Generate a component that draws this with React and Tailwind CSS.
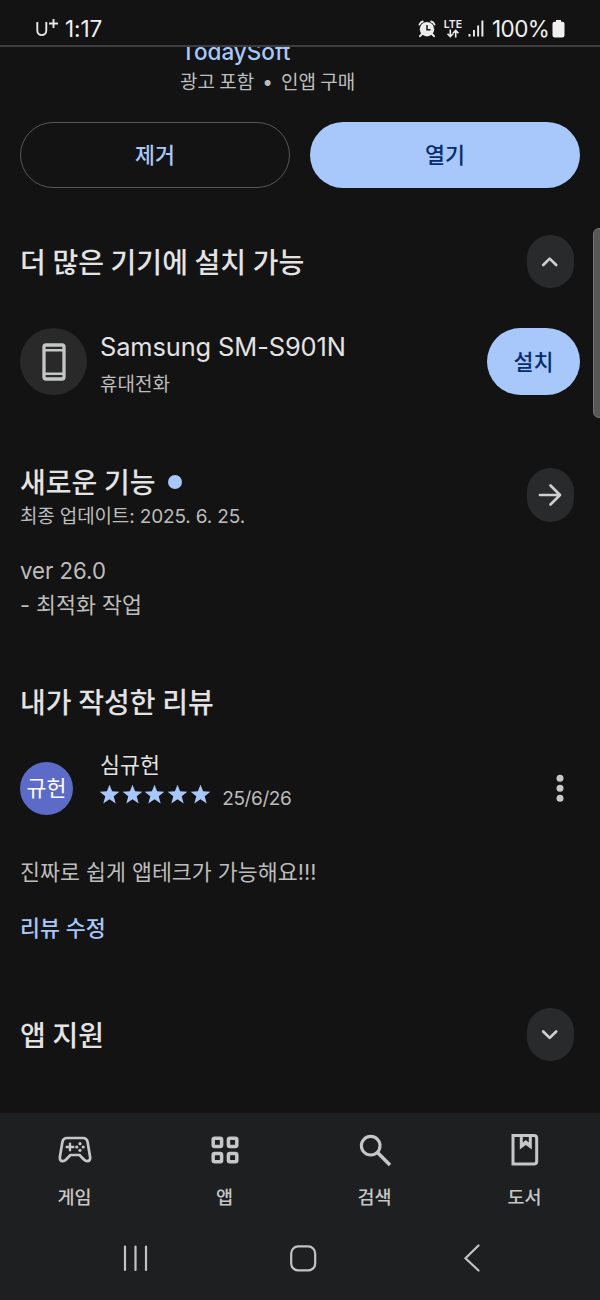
import React from "react";

function RoundButton({ children }) {
  return (
    <button className="mr-[6.500px] flex h-[53.500px] w-[47px] shrink-0 items-center justify-center rounded-full bg-[#292a2c]">
      {children}
    </button>
  );
}

function Chevron({ down }) {
  return (
    <svg width="20" height="12" viewBox="0 0 20 12" fill="none" stroke="#cfcfcf" strokeWidth="2.7" strokeLinecap="round" strokeLinejoin="round">
      <path d={down ? "M3.2 2.5 9.7 8.9 16.2 2.5" : "M3.2 9 9.7 2.6 16.2 9"} />
    </svg>
  );
}

function Heading({ children }) {
  return <h2 className="pt-[2px] text-[28px] leading-[38px] font-medium [word-spacing:-0.8px] whitespace-nowrap text-[#e3e3e3]">{children}</h2>;
}

function StatusBar() {
  return (
    <header className="flex h-[47px] shrink-0 items-center justify-between border-b-2 border-[#3d3d3d] pt-[12px] pr-[35px] pl-[36px] text-[#f0f0f0]">
      <div className="flex items-center text-[22.500px] leading-[30px]">
        <svg width="24" height="22" viewBox="0 0 24 22" fill="none" stroke="#e8e8e8" strokeWidth="1.9">
          <path d="M1.300 4v8.600a4.500 4.500 0 0 0 9 0V4M17.500 1v9M13 5.500h9" />
        </svg>
        <span className="ml-[5px] tracking-[-0.1px]">1:17</span>
      </div>
      <div className="flex items-center">
        <svg width="18" height="18" viewBox="0 0 18 18">
          <path d="M1.500 4.500Q2.500 2 4.800 1.500M13.200 1.500Q15.500 2 16.500 4.500" stroke="#ececec" strokeWidth="1.900" fill="none" strokeLinecap="round" />
          <circle cx="9" cy="9.200" r="7.200" fill="#ececec" />
          <path d="m4 14-2 2.200M14 14l2 2.200" stroke="#ececec" strokeWidth="2" strokeLinecap="round" />
          <path d="M9 5v4.700h3.500" stroke="#131313" strokeWidth="1.500" fill="none" />
        </svg>
        <div className="ml-[7px] flex w-[20px] flex-col items-center">
          <span className="text-[10.5px] leading-[9px] font-semibold">LTE</span>
          <svg width="14" height="9" viewBox="0 0 14 9" fill="none" stroke="#ececec" strokeWidth="1.6">
            <path d="M4.300.500v7M1.500 4.800l2.800 2.800 2.800-2.800M9.700 8.500v-7M6.900 4.200l2.800-2.800 2.800 2.800" />
          </svg>
        </div>
        <svg className="ml-[5px]" width="17" height="17" viewBox="0 0 17 17" fill="#ececec">
          <path d="M.500 14h2v2.500h-2zM5 10h1.900v6.500H5zM9.200 5.500h1.900v11H9.200zM13.400.500h2v16h-2z" />
        </svg>
        <span className="ml-[7px] w-[60px] text-[22.500px] leading-[30px] tracking-[-0.6px]">100%</span>
        <svg width="13" height="18" viewBox="0 0 13 18" fill="#f0f0f0">
          <path d="M4 0h5v1.700h1.500q2 0 2 2V15q0 2.500-2.500 2.500H3Q.500 17.500.500 15V3.700q0-2 2-2H4z" />
        </svg>
      </div>
    </header>
  );
}

function AppActions() {
  return (
    <section>
      <div className="-mt-[10px] pl-[160px]">
        <p className="pl-[1px] text-[22.500px] leading-[30px] font-medium text-[#a8c7fa]">TodaySoft</p>
        <p className="mt-[2px] text-[19px] leading-[28px] [word-spacing:-1px] whitespace-pre text-[#bdbdbd]">
          광고 포함<span className="px-[8px]">•</span>인앱 구매
        </p>
      </div>
      <div className="mt-[25px] grid grid-cols-2 gap-5">
        <button className="h-[66px] rounded-full border-[1.500px] border-[#555656] text-[21.700px] font-medium text-[#a8c7fa]">제거</button>
        <button className="h-[66px] rounded-full bg-[#a8c7fa] text-[21.700px] font-medium text-[#062e6f]">열기</button>
      </div>
    </section>
  );
}

function Devices() {
  return (
    <section className="mt-[47px]">
      <div className="flex h-[53px] items-center justify-between">
        <Heading>더 많은 기기에 설치 가능</Heading>
        <RoundButton><Chevron /></RoundButton>
      </div>
      <div className="mt-[40px] flex h-[67px] items-center">
        <div className="flex size-[67px] items-center justify-center rounded-full bg-[#292929]">
          <svg width="24" height="38" viewBox="0 0 24 38" fill="none" stroke="#c4c7c5">
            <rect x="2" y="2" width="20" height="34" rx="2" strokeWidth="3.300" />
            <path d="M3 7.300h18M3 30.700h18" strokeWidth="2.500" />
          </svg>
        </div>
        <div className="ml-[13px] flex-1 pt-[5px]">
          <p className="text-[25.400px] leading-[34px] tracking-[-0.1px] text-[#e3e3e3]">Samsung SM-S901N</p>
          <p className="mt-[7px] text-[19px] leading-[28px] text-[#bdbdbd]">휴대전화</p>
        </div>
        <button className="h-[67px] w-[93px] rounded-full bg-[#a8c7fa] pt-px text-[21.700px] font-medium text-[#062e6f]">설치</button>
      </div>
    </section>
  );
}

function WhatsNew() {
  return (
    <section className="mt-[67px]">
      <div className="flex h-[68px] justify-between">
        <div>
          <div className="flex items-center">
            <Heading>새로운 기능</Heading>
            <span className="ml-[13px] size-[14px] rounded-full bg-[#a8c7fa]" />
          </div>
          <p className="mt-[1px] text-[19px] leading-[28px] tracking-[-0.15px] text-[#bdbdbd]">최종 업데이트: 2025. 6. 25.</p>
        </div>
        <div className="mt-[6px]">
          <RoundButton>
            <svg width="24" height="24" viewBox="0 0 24 24" fill="none" stroke="#cfcfcf" strokeWidth="2.700" strokeLinecap="round" strokeLinejoin="round">
              <path d="M2 12h20M12.500 2.500 22 12l-9.500 9.500" />
            </svg>
          </RoundButton>
        </div>
      </div>
      <div className="mt-[24px] text-[21.700px] leading-[34px] text-[#bdbdbd]">
        <p className="text-[22.200px]">ver 26.0</p>
        <p>- 최적화 작업</p>
      </div>
    </section>
  );
}

function Review() {
  return (
    <section className="mt-[60px]">
      <Heading>내가 작성한 리뷰</Heading>
      <div className="mt-[29px] flex h-[64px]">
        <div className="mt-[11px] flex size-[53px] items-center justify-center rounded-full bg-[#5c6bc8] text-[21.700px] whitespace-nowrap text-white">규헌</div>
        <div className="ml-[26px] flex-1">
          <p className="pl-[1px] text-[21.700px] leading-[28px] text-[#e3e3e3]">심규헌</p>
          <div className="flex items-center">
            <div className="flex gap-[1.700px]">
              {[0, 1, 2, 3, 4].map((n) => (
                <svg key={n} width="21" height="21" viewBox="0 0 20 20" fill="#a8c7fa">
                  <path d="M10 .600 12.500 7 19.400 7.300 14 11.700 15.900 18.500 10 14.600 4.100 18.500 6 11.700.600 7.300 7.500 7Z" />
                </svg>
              ))}
            </div>
            <span className="mt-[8px] -mb-[2px] ml-[11.500px] text-[19px] leading-[24px] tracking-[-0.400px] text-[#bdbdbd]">25/6/26</span>
          </div>
        </div>
        <svg className="mt-[22px] mr-[15px]" width="10" height="30" viewBox="0 0 10 30" fill="#c8c8c8">
          <circle cx="5" cy="5.300" r="3.500" /><circle cx="5" cy="15.300" r="3.500" /><circle cx="5" cy="25.300" r="3.500" />
        </svg>
      </div>
      <p className="mt-[40px] text-[21.700px] leading-[34px] text-[#bdbdbd]">진짜로 쉽게 앱테크가 가능해요!!!</p>
      <p className="mt-[22px] text-[21.700px] leading-[34px] font-medium text-[#a8c7fa]">리뷰 수정</p>
    </section>
  );
}

const tabs = [
  {
    label: "게임",
    icon: (
      <svg width="36" height="36" viewBox="0 0 36 36" fill="none" stroke="#c7c7c7">
        <path d="M10 6h16q3.800 0 4.600 4l2.500 15q.5 4.200-3 4.200-1.600 0-3-1.500L22.500 23h-9L8.900 27.700q-1.400 1.500-3 1.500-3.500 0-3-4.200l2.500-15Q6.200 6 10 6Z" strokeWidth="2.700" strokeLinejoin="round" />
        <path d="M13 10.700v8.600M8.700 15h8.600" strokeWidth="2.300" />
        <g fill="#c7c7c7" stroke="none"><circle cx="23" cy="11.700" r="1.600" /><circle cx="23" cy="18.300" r="1.600" /><circle cx="19.800" cy="15" r="1.600" /><circle cx="26.200" cy="15" r="1.600" /></g>
      </svg>
    ),
  },
  {
    label: "앱",
    icon: (
      <svg width="36" height="36" viewBox="0 0 36 36" fill="none" stroke="#c7c7c7" strokeWidth="3.500">
        <rect x="6.200" y="6.200" width="8.400" height="8.400" rx="1.500" /><rect x="21.400" y="6.200" width="8.400" height="8.400" rx="1.500" /><rect x="6.200" y="21.400" width="8.400" height="8.400" rx="1.500" /><rect x="21.400" y="21.400" width="8.400" height="8.400" rx="1.500" />
      </svg>
    ),
  },
  {
    label: "검색",
    icon: (
      <svg width="36" height="36" viewBox="0 0 36 36" fill="none" stroke="#c7c7c7" strokeWidth="3.100">
        <circle cx="13.700" cy="13.700" r="9.300" /><path d="m20.500 20.500 12.500 12.500" strokeWidth="3.500" />
      </svg>
    ),
  },
  {
    label: "도서",
    icon: (
      <svg width="36" height="36" viewBox="0 0 36 36" fill="none" stroke="#c7c7c7" strokeWidth="3">
        <path d="M6 3.500h20.800q2.900 0 2.900 2.900v22.800q0 2.900-2.900 2.900H6Z" />
        <path d="M12.800 3v14.500l6-4.600 6 4.600V3h-3v7.500l-3-2.500-3 2.500V3Z" fill="#c7c7c7" stroke="none" />
      </svg>
    ),
  },
];

function BottomNav() {
  return (
    <footer className="flex h-[187px] shrink-0 flex-col bg-[#1e1f21]">
      <nav className="grid grid-cols-4 pt-[19px]">
        {tabs.map((tab) => (
          <div key={tab.label} className="flex flex-col items-center">
            {tab.icon}
            <span className="mt-[15px] -ml-px text-[18.500px] leading-[28px] font-medium text-[#c7c7c7]">{tab.label}</span>
          </div>
        ))}
      </nav>
      <div className="mt-[33px] flex h-[28px] items-center pl-[122px]">
        <svg width="28" height="28" viewBox="0 0 28 28" stroke="#c3c3c3" strokeWidth="2.200" strokeLinecap="round">
          <path d="M3 2.500v23.500M13.500 2.500v23.500M24 2.500v23.500" />
        </svg>
        <svg className="ml-[139px]" width="28" height="28" viewBox="0 0 28 28" fill="none" stroke="#c3c3c3" strokeWidth="2.200">
          <rect x="2.200" y="2.400" width="24" height="24" rx="7" />
        </svg>
        <svg className="ml-[146px]" width="18" height="28" viewBox="0 0 18 28" fill="none" stroke="#c3c3c3" strokeWidth="2.200" strokeLinecap="round">
          <path d="M15.500 1.500 2.500 14.300 15.500 26.500" />
        </svg>
      </div>
    </footer>
  );
}

export default function App() {
  return (
    <div className="relative flex h-[1300px] w-[600px] flex-col overflow-hidden bg-[#131313] font-['Inter','Noto_Sans_CJK_KR',sans-serif]">
      <StatusBar />
      <main className="min-h-0 flex-1 overflow-hidden px-5">
        <AppActions />
        <Devices />
        <WhatsNew />
        <Review />
        <section className="mt-[63px] flex h-[53px] items-center justify-between">
          <Heading>앱 지원</Heading>
          <RoundButton><Chevron down /></RoundButton>
        </section>
      </main>
      <BottomNav />
      <div className="absolute top-[228px] -right-px h-[190px] w-[8px] rounded-l-[6px] border border-[#747474] bg-[#585858]" />
    </div>
  );
}
